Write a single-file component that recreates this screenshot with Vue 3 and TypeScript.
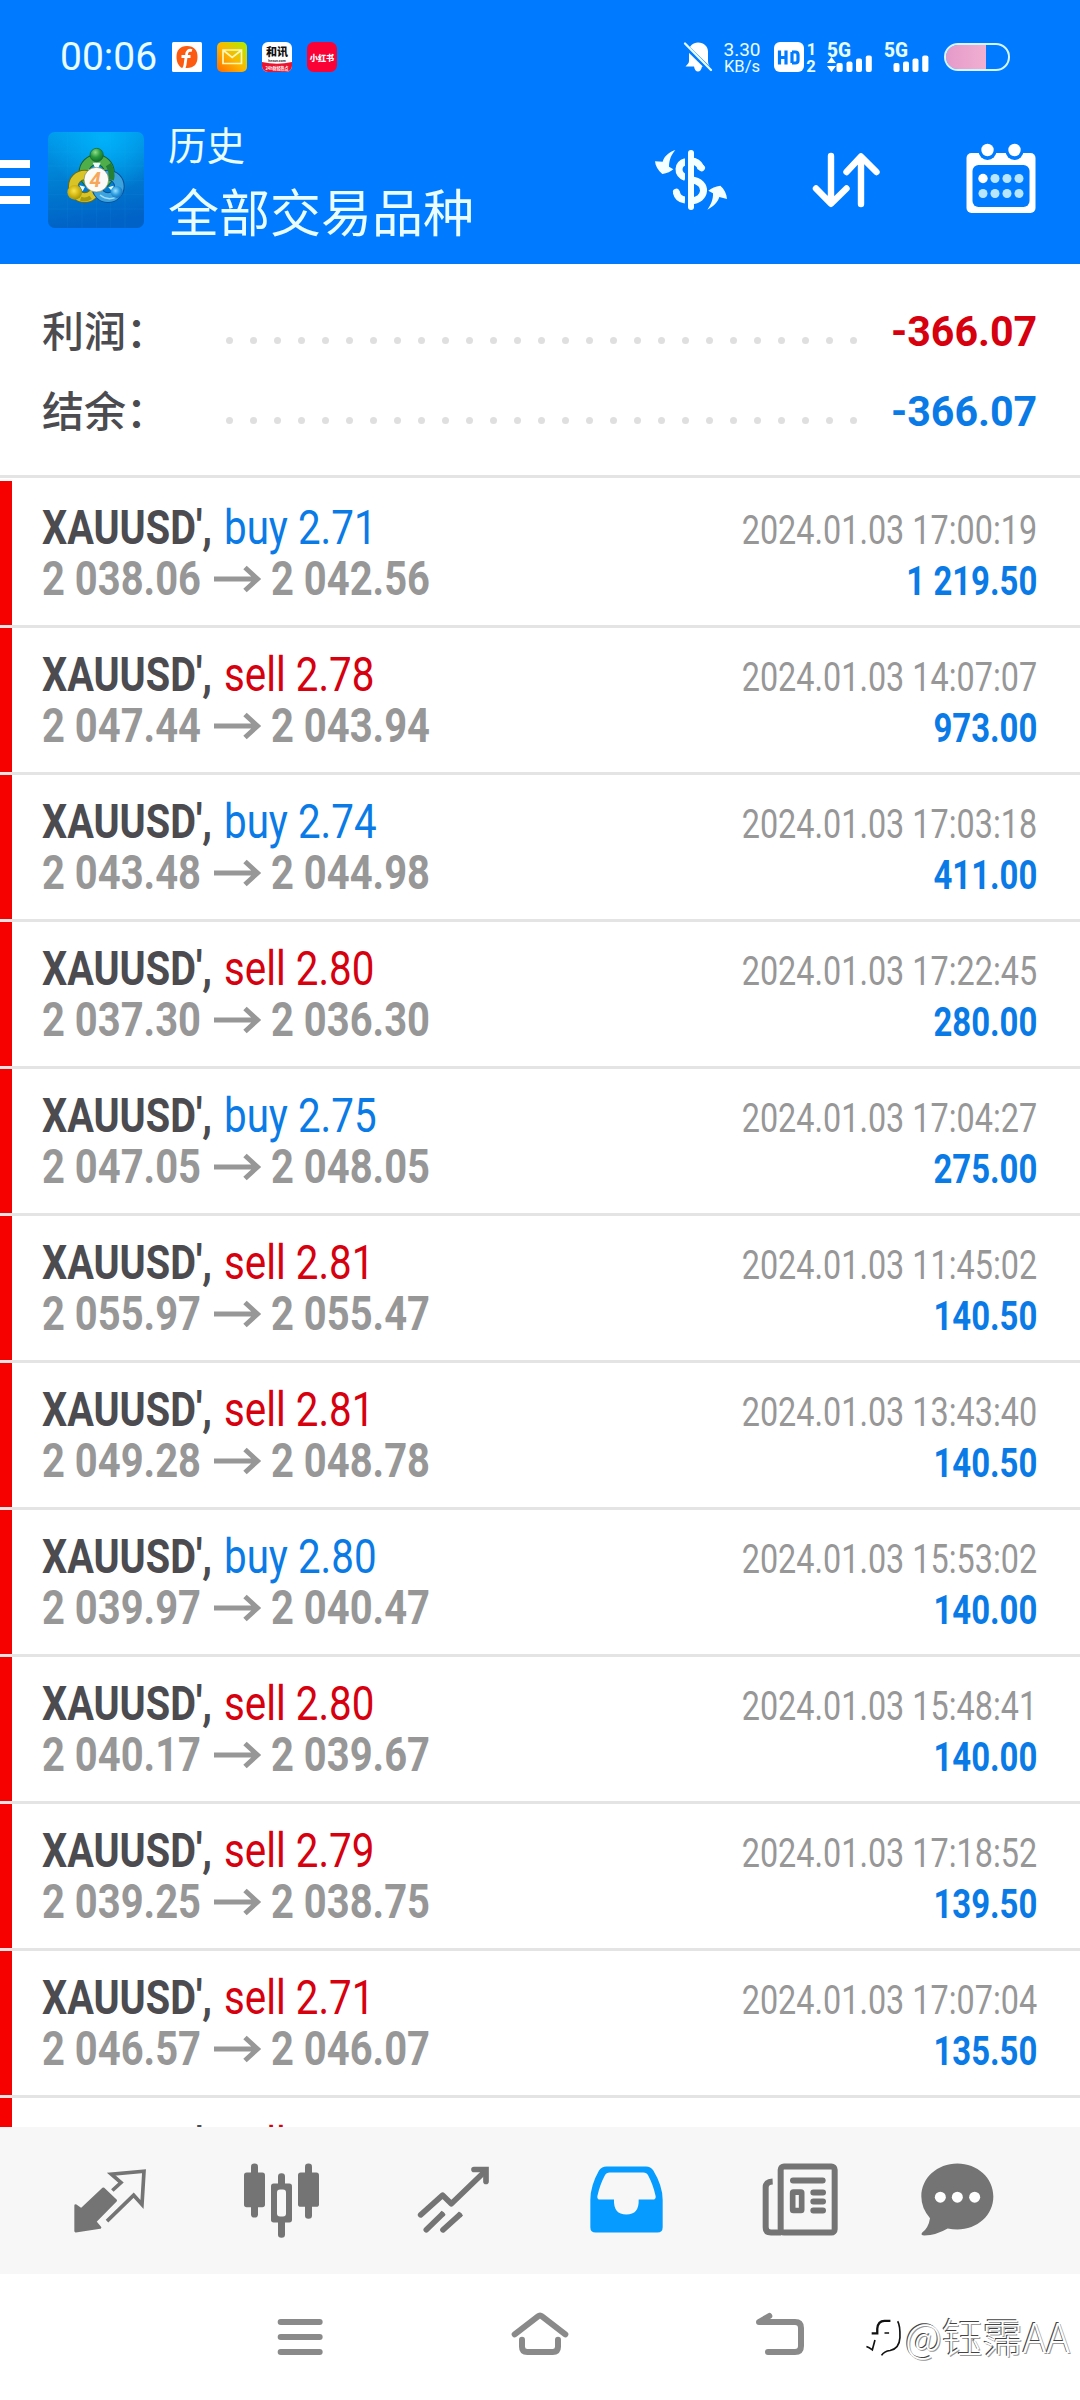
<script setup lang="ts">
interface Deal {
  side: 'buy' | 'sell'
  lots: string
  open: string
  close: string
  time: string
  profit: string
}

const deals: Deal[] = [
  { side: 'buy', lots: '2.71', open: '2 038.06', close: '2 042.56', time: '17:00:19', profit: '1 219.50' },
  { side: 'sell', lots: '2.78', open: '2 047.44', close: '2 043.94', time: '14:07:07', profit: '973.00' },
  { side: 'buy', lots: '2.74', open: '2 043.48', close: '2 044.98', time: '17:03:18', profit: '411.00' },
  { side: 'sell', lots: '2.80', open: '2 037.30', close: '2 036.30', time: '17:22:45', profit: '280.00' },
  { side: 'buy', lots: '2.75', open: '2 047.05', close: '2 048.05', time: '17:04:27', profit: '275.00' },
  { side: 'sell', lots: '2.81', open: '2 055.97', close: '2 055.47', time: '11:45:02', profit: '140.50' },
  { side: 'sell', lots: '2.81', open: '2 049.28', close: '2 048.78', time: '13:43:40', profit: '140.50' },
  { side: 'buy', lots: '2.80', open: '2 039.97', close: '2 040.47', time: '15:53:02', profit: '140.00' },
  { side: 'sell', lots: '2.80', open: '2 040.17', close: '2 039.67', time: '15:48:41', profit: '140.00' },
  { side: 'sell', lots: '2.79', open: '2 039.25', close: '2 038.75', time: '17:18:52', profit: '139.50' },
  { side: 'sell', lots: '2.71', open: '2 046.57', close: '2 046.07', time: '17:07:04', profit: '135.50' },
  { side: 'sell', lots: '2.70', open: '2 046.60', close: '2 046.10', time: '17:07:10', profit: '135.00' },
]

const totals = [
  { label: '利润：', value: '-366.07', tone: 'sell' },
  { label: '结余：', value: '-366.07', tone: 'buy' },
]
</script>

<template>
  <div class="screen">
    <header class="top">
      <div class="status">
        <span class="clock">00:06</span>
        <div class="apps">
          <svg viewBox="0 0 30 30"><rect width="30" height="30" rx="1.500" fill="#fff" /><path d="M15 4C8 4 4.500 8 4.500 15c0 5 2 9 5.500 11h5c7 0 10.500-4 10.500-11S22 4 15 4z" fill="#fb5a10" /><path d="M20 8.500c-3.500-1-5.200 1-5.600 4.500L13 23c-.3 2-1 3-1.800 4M9.500 14.500h9" fill="none" stroke="#fff" stroke-width="2.800" /></svg>
          <svg viewBox="0 0 30 30"><defs><linearGradient id="mail" x1="0" y1="1" x2="1" y2="0"><stop offset="0" stop-color="#ff6a00" /><stop offset=".5" stop-color="#fbb900" /><stop offset="1" stop-color="#a8f000" /></linearGradient></defs><rect width="30" height="30" rx="5" fill="url(#mail)" /><path d="M6 8h18.500v13.500H6zM6.500 8.500l8.700 7 8.800-7" fill="none" stroke="#fff7b8" stroke-width="1.700" /></svg>
          <svg viewBox="0 0 30 30"><rect width="30" height="30" rx="6" fill="#fff" /><path d="M0 20q15 3.500 30 0v4a6 6 0 0 1-6 6H6a6 6 0 0 1-6-6z" fill="#ea1530" /><text x="15" y="13.800" text-anchor="middle" font-size="11" font-weight="900" fill="#111" class="cjk">和讯</text><text x="15" y="19.500" text-anchor="middle" font-size="3.500" font-weight="700" fill="#333">hexun.com</text><text x="15" y="27.500" text-anchor="middle" font-size="4.200" font-weight="700" fill="#fff" textLength="23" lengthAdjust="spacingAndGlyphs" class="cjk">24h财经热点</text></svg>
          <svg viewBox="0 0 30 30"><rect width="30" height="30" rx="6.500" fill="#fb0237" /><text x="15" y="18.500" text-anchor="middle" font-size="8.200" font-weight="900" fill="#fff" class="cjk">小红书</text></svg>
        </div>
        <div class="indicators">
          <svg class="bell" viewBox="0 0 28 32"><path d="M14 1.500c-5.300 0-9 3.800-9 9V20c0 2-1.500 3.500-3.500 5.500H10c.5 3 2 5 4 5s3.500-2 4-5h8C24 23.500 24 21 24 19v-8.500c0-5-4-9-10-9z" fill="#fff" /><path d="M0 3.500l27 26.500" stroke="#007bff" stroke-width="5" /><path d="M1 2.500l26 26.500" stroke="#e4fbff" stroke-width="2.300" stroke-linecap="round" /></svg>
          <div class="speed"><span>3.30</span><small>KB/s</small></div>
          <svg class="hd" viewBox="0 0 44 32"><rect x="0" y="1" width="30" height="30" rx="6" fill="#fff" /><path d="M5.500 9.500v14M12 9.500v14M5.500 16.500H12M18 11v11M18 11h3.200q2.800 0 2.800 2.800v5.400q0 2.800-2.800 2.800H18" fill="none" stroke="#007bff" stroke-width="3.200" /><text x="37.500" y="13.500" text-anchor="middle" font-size="16.500" font-weight="700" fill="#e4fbff">1</text><text x="37" y="31" text-anchor="middle" font-size="16.500" font-weight="700" fill="#e4fbff">2</text></svg>
          <svg class="signal" viewBox="0 0 46 32"><text x="0" y="15.500" font-size="19.500" font-weight="800" textLength="24" lengthAdjust="spacingAndGlyphs" fill="#e4fbff">5G</text><path d="M0 22l4.500-6 4.500 6zM0 25h9l-4.500 6z" fill="#fff" /><g fill="#fff"><rect x="9.500" y="22" width="6.200" height="9" rx="2" /><rect x="19.500" y="20.500" width="6" height="10.500" rx="2" /><rect x="29" y="17.500" width="6" height="13.500" rx="2" /><rect x="38.800" y="14.500" width="6" height="16.500" rx="2" /></g></svg>
          <svg class="signal second" viewBox="0 0 46 32"><text x="0" y="15.500" font-size="19.500" font-weight="800" textLength="24" lengthAdjust="spacingAndGlyphs" fill="#e4fbff">5G</text><g fill="#fff"><rect x="9.500" y="22" width="6" height="9" rx="2" /><rect x="19" y="20.500" width="6" height="10.500" rx="2" /><rect x="28.500" y="17.500" width="6" height="13.500" rx="2" /><rect x="38.200" y="14.500" width="6.200" height="16.500" rx="2" /></g></svg>
          <svg class="battery" viewBox="0 0 66 28"><defs><linearGradient id="charge"><stop offset="0" stop-color="#e59ac9" /><stop offset="1" stop-color="#f1b0d2" /></linearGradient></defs><path d="M42 2H14a12 12 0 0 0 0 24h28z" fill="url(#charge)" /><rect x="1" y="1" width="64" height="26" rx="13" fill="none" stroke="#d5f6ff" stroke-width="2" /></svg>
        </div>
      </div>
      <div class="appbar">
        <div class="menu"><i /><i /><i /></div>
        <svg class="logo" viewBox="24 66 288 288">
          <defs>
            <linearGradient id="tile" x1="0" y1="0" x2=".15" y2="1"><stop offset="0" stop-color="#009ced" /><stop offset=".5" stop-color="#007fd2" /><stop offset="1" stop-color="#0062c6" /></linearGradient>
            <radialGradient id="glow" cx=".58" cy=".05" r=".6"><stop offset="0" stop-color="#00b2fa" /><stop offset="1" stop-color="#00b2fa" stop-opacity="0" /></radialGradient>
            <radialGradient id="green" cx=".4" cy=".3" r=".75"><stop offset="0" stop-color="#8fe08a" /><stop offset=".5" stop-color="#299a3d" /><stop offset="1" stop-color="#0b6b2a" /></radialGradient>
            <radialGradient id="yellow" cx=".45" cy=".4" r=".7"><stop offset="0" stop-color="#f9e64c" /><stop offset=".5" stop-color="#d3b512" /><stop offset="1" stop-color="#8c8a08" /></radialGradient>
            <radialGradient id="sky" cx=".4" cy=".4" r=".7"><stop offset="0" stop-color="#9be0ff" /><stop offset=".5" stop-color="#2d9ddf" /><stop offset="1" stop-color="#0c64b4" /></radialGradient>
          </defs>
          <rect x="24" y="66" width="288" height="288" rx="20" fill="url(#tile)" />
          <rect x="24" y="66" width="288" height="288" rx="20" fill="url(#glow)" />
          <path d="M83 66v288M126 66v288M169 66v288M212 66v288M255 66v288M24 126h288M24 168h288M24 211h288M24 254h288M24 297h288" stroke="#2fb2ff" stroke-opacity=".14" stroke-width="2" />
          <g fill="none">
            <circle cx="170" cy="187" r="38" stroke="#17602f" stroke-width="32" />
            <circle cx="170" cy="187" r="38" stroke="#4fae4a" stroke-width="26" />
            <circle cx="134" cy="229" r="34" stroke="#6e6c10" stroke-width="32" />
            <circle cx="134" cy="229" r="34" stroke="#d9c428" stroke-width="26" />
            <circle cx="204" cy="229" r="34" stroke="#0b4f93" stroke-width="32" />
            <circle cx="204" cy="229" r="34" stroke="#3ba4df" stroke-width="26" />
            <path d="M205 164q14 21 8 45" stroke="#247f37" stroke-width="18" />
            <path d="M152 262q-14 10-30 4" stroke="#a69a12" stroke-width="12" />
            <path d="M180 255q26 20 52 4" stroke="#a6dcfa" stroke-width="4" />
          </g>
          <path d="M158 158h24l-8 17h-8zM118 226l17 4-7 14zM205 232l16-5-5 16z" fill="#ecffff" />
          <circle cx="170" cy="135" r="20" fill="url(#green)" stroke="#17602f" stroke-width="2" />
          <circle cx="104" cy="247" r="22" fill="url(#yellow)" />
          <circle cx="230" cy="246" r="18" fill="url(#sky)" />
          <circle cx="169" cy="209" r="37" fill="#fdfbf8" stroke="#6b7b3c" stroke-opacity=".6" stroke-width="3" />
          <text x="166" y="231" text-anchor="middle" font-size="62" font-style="italic" font-weight="700" fill="#f6a75a">4</text>
        </svg>
        <div class="titles">
          <div class="sub">历史</div>
          <div class="main">全部交易品种</div>
        </div>
        <div class="actions">
          <svg viewBox="30 0 240 240" fill="none" stroke="#f4ffff" stroke-linecap="round">
            <path d="M150 39v162" stroke-width="18" />
            <path d="M180 83C174 70 165 63 150 63M134 65C110 72 105 100 134 113M150 119C205 125 195 183 150 182M106 157C109 171 119 179 132 180" stroke-width="21" stroke-linecap="butt" />
            <path d="M179 82l3 2M106 156l1 2" stroke-width="20" />
            <path d="M136 48v146" stroke="#007bff" stroke-width="8" stroke-linecap="butt" />
            <path d="M103 30C86 35 69 49 65 65L42 64c1 13 8 27 22 38 14-2 26-7 33-14L84 80c0-20 7-36 19-50zM199 209c16-8 31-21 36-38l23 6c-1-15-8-30-20-40-15 2-26 7-36 15l14 8c1 17-6 34-17 49z" fill="#f4ffff" stroke="none" />
          </svg>
          <svg viewBox="0 0 80 80" fill="none" stroke="#fff" stroke-width="6.400" stroke-linecap="round" stroke-linejoin="round"><path d="M25 16v47M10 48.500l15 15.300 15.500-15.300M55 64V17M40.500 32L55 16.500 70.500 32" /></svg>
          <svg viewBox="0 0 80 80"><rect x="5.500" y="13" width="69" height="60" rx="5" fill="#fff" /><rect x="11.500" y="25" width="57" height="42" rx="6" fill="#007bff" /><g fill="#007bff"><circle cx="26.500" cy="11" r="9" /><circle cx="53.500" cy="11" r="9" /></g><g fill="#fff"><circle cx="26.500" cy="10" r="6.200" /><circle cx="53.500" cy="10" r="6.200" /><circle cx="22" cy="38.500" r="4.700" /></g><g fill="#b9e6ff"><circle cx="34" cy="38.500" r="4.500" /><circle cx="46" cy="38.500" r="4.500" /><circle cx="58" cy="38.500" r="4.500" /><circle cx="22" cy="53.500" r="4.500" /><circle cx="34" cy="53.500" r="4.500" /><circle cx="46" cy="53.500" r="4.500" /><circle cx="58" cy="53.500" r="4.500" /></g></svg>
        </div>
      </div>
    </header>

    <section class="summary">
      <div v-for="t in totals" :key="t.label" class="total">
        <span class="label">{{ t.label }}</span>
        <span class="dots"><i v-for="n in 27" :key="n" /></span>
        <b :class="t.tone">{{ t.value }}</b>
      </div>
    </section>

    <main class="list">
      <article v-for="(d, i) in deals" :key="i" class="deal">
        <div class="line">
          <div class="left"><span class="symbol">XAUUSD',</span><span class="side" :class="d.side">{{ d.side }} {{ d.lots }}</span></div>
          <span class="time">2024.01.03 {{ d.time }}</span>
        </div>
        <div class="line">
          <div class="left">
            <span class="price first">{{ d.open }}</span>
            <svg class="arrow" viewBox="0 0 48 28"><path d="M0 14h43M31 2.500L43.500 14 31 25.500" fill="none" stroke="#979798" stroke-width="5" /></svg>
            <span class="price">{{ d.close }}</span>
          </div>
          <span class="profit">{{ d.profit }}</span>
        </div>
      </article>
    </main>

    <nav class="tabs">
      <svg viewBox="198 259.500 264 264"><path d="M310 355l37 35-62 63 15 18-73 11V405l17 12z" fill="#747474" stroke="#747474" stroke-width="8" stroke-linejoin="round" /><path d="M337 360l26-24-29-25 98-9-6 100-25-28-80 78" fill="none" stroke="#747474" stroke-width="11" /></svg>
      <svg viewBox="714 259.500 264 264"><g fill="#747474"><rect x="732" y="306" width="63" height="104" rx="8" /><rect x="753" y="279" width="21" height="162" rx="10" /><rect x="894" y="306" width="63" height="103" rx="8" /><rect x="915" y="279" width="21" height="166" rx="10" /><rect x="813" y="339" width="63" height="117" rx="8" /><rect x="834" y="308" width="21" height="194" rx="10" /></g><rect x="831" y="357" width="27" height="81" rx="9" fill="#f7f7f7" /></svg>
      <svg viewBox="150 259.500 264 264" fill="none" stroke="#747474" stroke-width="17" stroke-linecap="round"><path d="M182 433l66-59 26 26 98-95" stroke-linejoin="round" /><path d="M342 297h36v36" stroke-linejoin="miter" /><path d="M362 297l16 20V297z" fill="#747474" stroke-width="6" /><path d="M199 478l47-46M249 478l49-44" /><path d="M246 432l5-5M298 434l5-5" stroke-linecap="butt" /></svg>
      <svg viewBox="666 259.500 264 264"><path fill="#069bff" fill-rule="evenodd" d="M740 288h118q14 0 22 12 28 46 28 88v82q0 16-16 16H707q-16 0-16-16v-82q0-42 26-88 8-12 23-12zM749 306q-10 0-15 10-14 26-22 61-1 10 8 10h42q-2 45 37 45t37-45h42q10 0 9-10-8-35-22-61-5-10-15-10z" /></svg>
      <svg viewBox="102 259.500 264 264" fill="none" stroke="#747474"><rect x="182" y="288" width="162" height="198" rx="10" stroke-width="18" /><path d="M158 333q-21 1-21 18v119q0 16 16 16h30" stroke-width="18" /><path d="M219 330h89" stroke-width="18" stroke-linecap="round" /><rect x="218" y="365" width="27" height="55" rx="2" stroke-width="17" /><path d="M280 366h29M280 393h29M280 420h29" stroke-width="18" stroke-linecap="round" /></svg>
      <svg viewBox="620 259.500 264 264"><path d="M714 279c60 0 108 43 108 99s-48 99-108 99q-14 0-29-3-34 20-70 21-12 0-7-8 20-16 24-44-26-30-26-65c0-56 48-99 108-99z" fill="#747474" /><g fill="#fff"><circle cx="663" cy="380" r="16.500" /><circle cx="714" cy="380" r="16.500" /><circle cx="766" cy="380" r="16.500" /></g></svg>
    </nav>

    <footer class="system">
      <svg viewBox="810 711 180 180"><path d="M842 756h117M842 801h117M842 846h117" /></svg>
      <svg viewBox="450 711 180 180"><path d="M464 793l70-54q6-5 12 0l70 54M486 809v21q0 16 16 16h76q16 0 16-16v-21" /></svg>
      <svg viewBox="90 711 180 180"><path d="M144 846h81q18 0 18-18v-54q0-18-18-18H117l31-18" /></svg>
      <div class="mark">
        <svg viewBox="10 30 115 140" fill="none" stroke="#111" stroke-width="5"><path d="M30 92h17V78q2-24 22-24h18" stroke-width="7" /><path d="M69 91h14M14 132q8 3 18 10l8-30M109 55q8 12 7 50-2 34-30 39-18 2-26 15" /></svg>
        <span>@钰霈AA</span>
      </div>
    </footer>
  </div>
</template>

<style>
body {
  margin: 0;
}
</style>

<style scoped>
.screen {
  width: 1080px;
  height: 2400px;
  display: flex;
  flex-direction: column;
  overflow: hidden;
  background: #fff;
  font-family: Roboto, "Noto Sans CJK SC", sans-serif;
}
svg {
  display: block;
  flex: none;
  overflow: visible;
}
.cjk {
  font-family: "Noto Sans CJK SC", sans-serif;
}
.top {
  flex: none;
  height: 264px;
  background: #007bff;
  color: #e9fcff;
}
.status {
  display: flex;
  align-items: center;
  height: 114px;
  padding: 0 70px 0 60px;
}
.clock {
  width: 112px;
  font-size: 39px;
  line-height: 46px;
}
.apps {
  display: flex;
  gap: 15px;
}
.apps svg {
  width: 30px;
  height: 30px;
}
.indicators {
  display: flex;
  align-items: center;
  margin-left: auto;
}
.bell {
  width: 28px;
  height: 32px;
}
.speed {
  display: flex;
  flex-direction: column;
  align-items: center;
  width: 38px;
  margin: 2px 13px 0 11px;
  font-size: 19px;
  line-height: 16px;
}
.speed small {
  font-size: 16.500px;
  line-height: 17px;
}
.hd {
  width: 44px;
  height: 32px;
}
.signal {
  width: 46px;
  height: 32px;
  margin-left: 9px;
}
.signal.second {
  margin-left: 11px;
}
.battery {
  width: 66px;
  height: 28px;
  margin-left: 14px;
}
.appbar {
  display: flex;
  align-items: flex-start;
  height: 150px;
  padding-right: 39px;
}
.menu {
  display: flex;
  flex-direction: column;
  gap: 10px;
  width: 30px;
  margin-top: 46px;
}
.menu i {
  height: 8px;
  background: #fff;
}
.logo {
  width: 96px;
  height: 96px;
  margin: 18px 0 0 18px;
}
.titles {
  margin: 8px 0 0 24px;
  font-family: "Noto Sans CJK SC", sans-serif;
  font-weight: 400;
}
.sub {
  font-size: 38.500px;
  line-height: 42px;
}
.main {
  font-size: 51px;
  line-height: 92px;
}
.actions {
  display: flex;
  gap: 75px;
  margin: 26px 0 0 auto;
}
.actions svg {
  width: 80px;
  height: 80px;
}
.summary {
  flex: none;
  box-sizing: border-box;
  height: 214px;
  padding: 26px 43px 0 42px;
  border-bottom: 3px solid #e4e4e4;
}
.total {
  display: flex;
  align-items: center;
  height: 80px;
}
.label {
  width: 184px;
  color: #4b4b50;
  font: 500 42px/77px "Noto Sans CJK SC", sans-serif;
  height: 80px;
}
.dots {
  display: flex;
  justify-content: space-between;
  width: 631px;
  padding-top: 20px;
}
.dots i {
  width: 7px;
  height: 7px;
  border-radius: 50%;
  background: #dfdfdf;
}
.total b {
  margin-left: auto;
  padding-top: 3px;
  font-size: 42px;
  line-height: 77px;
  transform: scaleX(0.98);
  transform-origin: right;
}
.buy,
.profit {
  color: #0a7be6;
}
.sell {
  color: #d6000f;
}
.list {
  flex: none;
  height: 1646px;
  padding-top: 3px;
  overflow: hidden;
}
.deal {
  box-sizing: border-box;
  height: 147px;
  padding: 21px 43px 0 42px;
  border-bottom: 3px solid #e4e4e4;
  background: linear-gradient(#f60000, #f60000) 0 0 / 12px 144px no-repeat padding-box;
}
.line {
  display: flex;
  justify-content: space-between;
  align-items: baseline;
  height: 51px;
  line-height: 51px;
  white-space: pre;
}
.left {
  display: flex;
  align-items: baseline;
}
.symbol,
.side,
.price {
  display: block;
  font-size: 48px;
  transform-origin: left;
}
.symbol {
  width: 182px;
  color: #4b4b50;
  font-weight: 700;
  transform: scaleX(0.826);
}
.side {
  transform: scaleX(0.84);
}
.price {
  color: #979798;
  font-weight: 700;
  transform: scaleX(0.832);
}
.price.first {
  width: 172px;
}
.arrow {
  width: 48px;
  height: 28px;
  margin-right: 9px;
  align-self: center;
}
.time,
.profit {
  font-size: 40px;
  transform-origin: right;
}
.time {
  color: #979798;
  transform: scaleX(0.809);
}
.profit {
  font-weight: 700;
  transform: scaleX(0.822);
}
.tabs {
  flex: none;
  display: flex;
  align-items: center;
  justify-content: space-between;
  height: 147px;
  padding: 0 66px;
  background: #f7f7f7;
}
.tabs svg {
  width: 88px;
  height: 88px;
}
.system {
  position: relative;
  display: flex;
  align-items: center;
  justify-content: center;
  gap: 180px;
  height: 126px;
}
.system > svg {
  width: 60px;
  height: 60px;
  fill: none;
  stroke: #8a8a8a;
  stroke-width: 18px;
  stroke-linecap: round;
  stroke-linejoin: round;
}
.mark {
  position: absolute;
  right: 10px;
  top: 38px;
  display: flex;
  align-items: center;
  gap: 2px;
  color: #fff;
  font: 300 40.500px/48px "Noto Sans CJK SC", sans-serif;
  text-shadow: -1px -1px 0 #444, 1px 1px 0 #999;
}
.mark svg {
  width: 38px;
  height: 46px;
}
</style>
